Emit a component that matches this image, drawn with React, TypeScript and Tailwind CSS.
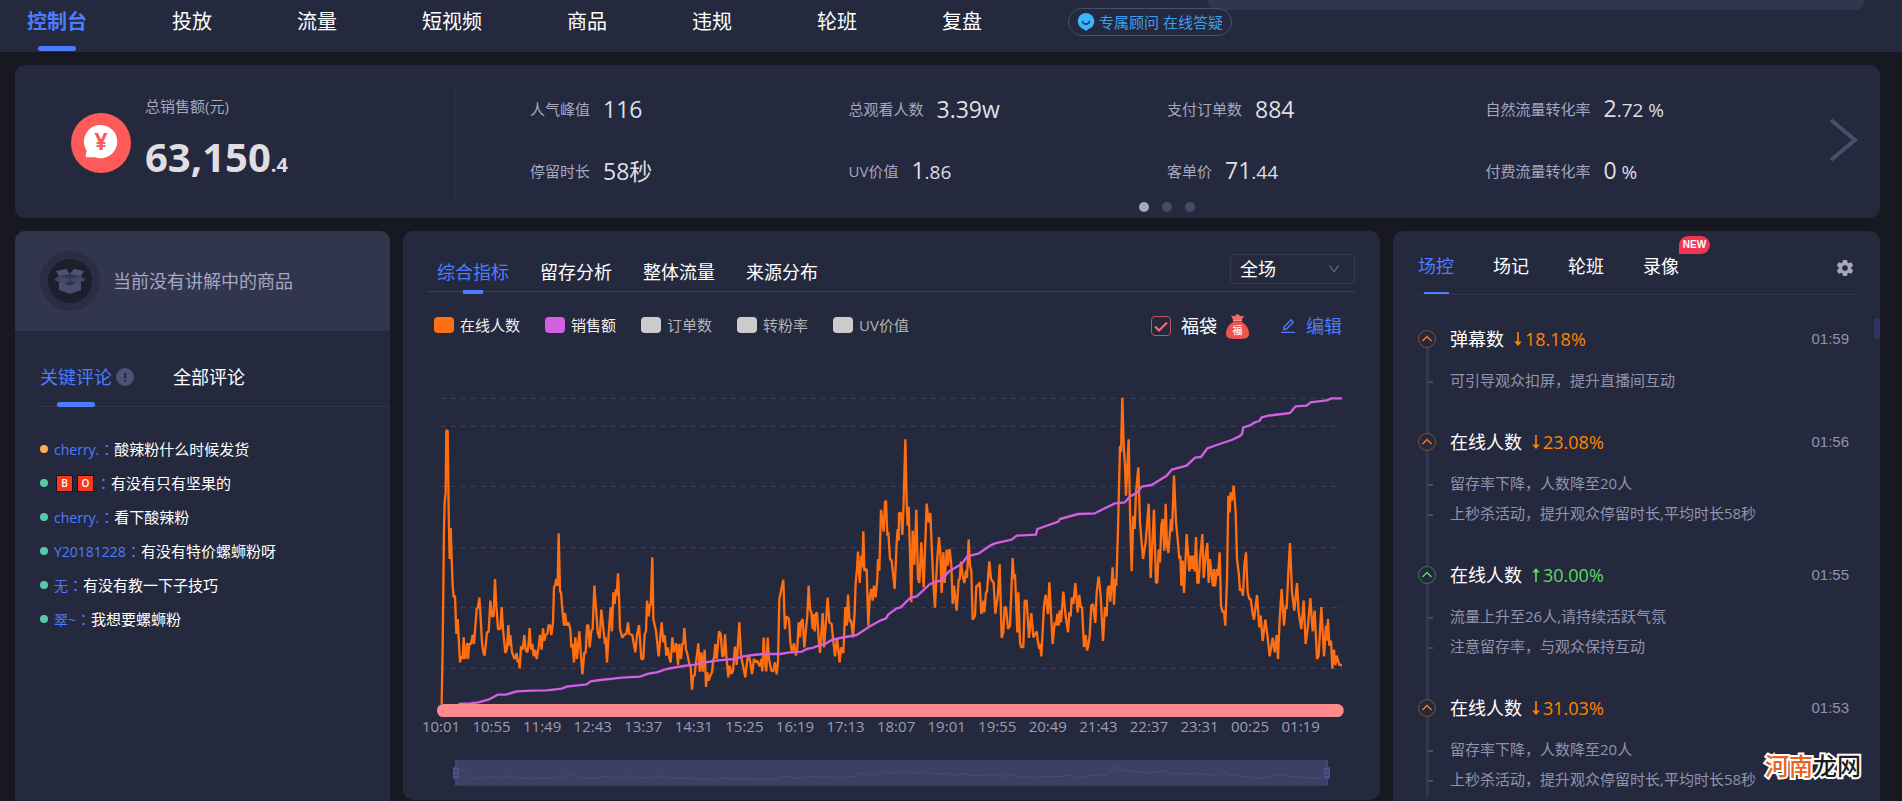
import { useState } from 'react';
import clsx from 'clsx';
import { AiOutlineDown, AiOutlineEdit } from 'react-icons/ai';
import { IoMdSettings } from 'react-icons/io';

const navItems = ['控制台', '投放', '流量', '短视频', '商品', '违规', '轮班', '复盘'];

const metrics = [
  { label: '人气峰值', value: '116' },
  { label: '总观看人数', value: '3.39w' },
  { label: '支付订单数', value: '884' },
  { label: '自然流量转化率', value: '2', small: '.72 %' },
  { label: '停留时长', value: '58秒' },
  { label: 'UV价值', value: '1', small: '.86' },
  { label: '客单价', value: '71', small: '.44' },
  { label: '付费流量转化率', value: '0', small: ' %' },
];

const comments = [
  { name: 'cherry.', text: '酸辣粉什么时候发货', hot: true },
  { name: 'BO', text: '有没有只有坚果的', blocks: true },
  { name: 'cherry.', text: '看下酸辣粉' },
  { name: 'Y20181228', text: '有没有特价螺蛳粉呀' },
  { name: '无', text: '有没有教一下子技巧' },
  { name: '翠~', text: '我想要螺蛳粉' },
];

const chartTabs = ['综合指标', '留存分析', '整体流量', '来源分布'];

const legend = [
  { label: '在线人数', box: 'bg-[#ff6f12]', text: 'text-[#f0f0f0]' },
  { label: '销售额', box: 'bg-[#d35fe3]', text: 'text-[#f0f0f0]' },
  { label: '订单数', box: 'bg-[#cccccc]', text: 'text-[#b3b3b5]' },
  { label: '转粉率', box: 'bg-[#cccccc]', text: 'text-[#b3b3b5]' },
  { label: 'UV价值', box: 'bg-[#cccccc]', text: 'text-[#b3b3b5]' },
];

const events = [
  { title: '弹幕数', pct: '18.18%', up: false, time: '01:59', tips: ['可引导观众扣屏，提升直播间互动'] },
  { title: '在线人数', pct: '23.08%', up: false, time: '01:56', tips: ['留存率下降，人数降至20人', '上秒杀活动，提升观众停留时长,平均时长58秒'] },
  { title: '在线人数', pct: '30.00%', up: true, time: '01:55', tips: ['流量上升至26人,请持续活跃气氛', '注意留存率，与观众保持互动'] },
  { title: '在线人数', pct: '31.03%', up: false, time: '01:53', tips: ['留存率下降，人数降至20人', '上秒杀活动，提升观众停留时长,平均时长58秒'] },
];

const times = ['10:01', '10:55', '11:49', '12:43', '13:37', '14:31', '15:25', '16:19', '17:13', '18:07', '19:01', '19:55', '20:49', '21:43', '22:37', '23:31', '00:25', '01:19'];

// x,y pairs in chart units, first half of the stream
const onlineDay =
  '125,975 128,800 132,450 134,370 137,340 139,155 143,155 146,400 149,540 152,447 155,540 158,620 161,655 165,650 169,765 173,720 180,850 184,830 188,840 191,775 195,840 198,820 202,792 204,840 208,795 213,795 218,768 222,795 230,690 234,685 238,656 241,700 246,790 250,820 254,830 261,760 266,758 271,665 276,712 281,712 285,600 288,665 294,750 301,750 305,684 309,750 316,822 321,810 325,738 328,800 331,768 336,820 344,840 350,822 353,850 356,840 359,868 363,802 368,812 373,768 377,812 382,820 385,802 389,747 393,812 397,795 401,832 405,812 410,840 416,802 420,768 425,812 429,748 433,785 437,768 442,765 446,738 450,740 454,768 459,730 462,625 465,620 469,600 473,620 476,463 480,637 483,640 488,702 492,740 495,702 500,740 505,730 511,750 514,805 518,795 522,850 526,775 531,840 538,757 543,830 547,886 553,820 557,822 561,740 565,738 569,805 574,755 578,750 583,620 589,700 593,760 599,778 604,692 609,740 615,795 617,775 621,850 626,765 632,684 636,757 640,640 644,675 648,630 650,650 654,583 657,650 660,750 667,776 674,766 679,765 684,730 688,765 697,768 701,792 706,820 711,768 717,738 724,840 730,840 734,765 738,757 741,665 746,712 750,675 752,680 757,535 760,720 768,755 776,832 785,730 790,790 794,768 799,830 803,805 807,832 812,850 817,775 822,820 829,793 834,858 838,795 843,840 847,793 850,795 853,747 858,812 862,825 868,855 872,865 876,932 880,890 884,890 888,850 895,793 899,878 904,820 908,878 914,812 918,924 922,880 926,905 931,890 936,880 940,840 942,840 946,795 950,840 957,757 962,765 967,832 971,830 975,766 979,830 985,895 989,860 994,885 999,875 1005,803 1010,858 1018,730 1023,830 1030,865 1036,895 1042,840 1047,830 1051,850 1056,885 1062,840 1068,850 1072,845 1077,858 1080,862 1084,840 1087,877 1091,776 1096,860 1099,877 1103,776 1107,840 1114,875 1120,877 1125,850 1130,886 1134,850 1138,660 1150,602 1153,700 1155,750 1160,712 1167,720 1171,790 1176,820 1182,793 1188,830 1192,805 1196,730 1200,775 1203,730 1208,720 1213,805 1219,740 1222,710 1226,620 1230,690 1234,700 1238,750 1241,705 1244,757 1248,702 1251,702 1256,780 1260,822 1268,702 1272,805 1277,740 1283,656 1288,730 1295,735 1298,768 1305,832 1311,778 1319,850 1323,805 1330,822 1336,684 1340,740 1344,647 1349,730 1353,722 1359,775 1364,700 1367,610 1371,570 1374,518 1379,612 1384,530 1387,565 1390,457 1393,575 1400,570 1405,740 1409,655 1414,630 1418,665 1422,620 1427,655 1432,600 1434,540 1438,575 1443,392 1451,458 1455,370 1458,365 1462,470 1465,460 1470,540 1475,545 1484,630 1490,490 1493,450 1496,485';

// second half, x counted from 1440
const onlineNight =
  '57,402 63,402 67,468 70,400 76,181 80,370 83,440 86,383 94,670 98,455 103,557 109,392 114,600 118,612 124,490 131,625 140,374 146,430 151,402 155,500 160,610 165,686 171,550 177,474 181,520 185,642 190,520 194,612 200,512 203,560 209,510 214,560 218,675 222,620 230,695 236,602 239,602 243,548 248,590 253,612 258,575 261,597 266,482 270,560 274,575 278,722 285,710 289,620 294,620 299,610 304,705 311,665 313,700 318,640 321,638 328,547 333,600 341,612 346,704 354,645 359,556 365,777 370,760 374,684 378,685 384,750 390,740 398,537 402,600 405,585 412,760 415,640 420,790 423,804 430,804 434,665 440,665 447,777 454,702 460,775 470,757 474,790 478,810 480,795 484,832 492,680 497,648 504,705 508,610 518,795 524,730 528,740 532,705 536,740 539,695 543,730 550,638 557,712 564,760 568,700 572,712 575,656 580,675 586,612 593,700 598,648 602,685 606,684 612,804 617,768 621,814 625,800 629,770 634,680 639,675 646,732 650,640 656,593 662,650 669,786 675,684 680,712 683,630 687,620 691,668 698,565 702,677 706,600 709,620 714,450 720,200 723,220 727,56 731,200 735,260 738,350 746,181 750,400 755,577 760,410 764,450 768,340 775,265 780,430 789,540 797,490 806,374 812,597 822,392 828,612 832,610 836,512 840,550 844,440 848,420 853,515 857,374 861,500 865,522 873,420 876,457 882,290 888,430 893,480 898,540 901,530 904,620 908,545 912,642 920,465 924,520 928,577 932,530 936,570 940,530 944,577 948,474 952,612 956,612 960,540 967,465 971,597 977,530 982,492 986,612 990,540 996,600 999,622 1002,570 1005,622 1011,570 1014,590 1019,520 1023,680 1028,700 1032,695 1036,740 1041,600 1045,350 1049,400 1052,340 1056,365 1061,320 1067,400 1071,540 1076,580 1080,635 1085,630 1089,650 1093,560 1098,520 1103,640 1108,660 1112,660 1118,705 1122,722 1131,648 1138,745 1142,710 1148,786 1156,722 1163,775 1169,832 1178,776 1184,820 1190,768 1194,840 1199,720 1205,630 1212,740 1217,680 1220,690 1225,580 1230,492 1236,640 1243,695 1251,612 1256,700 1264,750 1271,665 1277,795 1284,740 1291,657 1298,757 1304,695 1311,840 1316,830 1324,684 1332,832 1338,740 1341,785 1344,720 1348,800 1353,785 1357,868 1362,812 1366,858 1370,830 1378,858 1386,858';

const salesDay =
  '175,975 210,973 235,970 265,962 293,947 318,947 350,937 395,935 440,934 485,929 500,923 560,916 572,907 600,903 640,899 665,896 720,893 745,884 770,880 800,870 850,861 885,857 915,850 955,844 1000,840 1030,832 1060,828 1090,825 1140,825 1165,821 1205,818 1220,810 1240,806 1260,798 1275,795 1295,783 1320,777 1370,768 1385,758 1410,742 1440,725';

const salesNight =
  '18,718 25,706 50,688 62,685 90,657 110,652 150,615 180,605 210,575 245,555 262,532 295,524 330,500 345,493 395,482 410,470 468,467 472,450 535,428 540,420 595,405 645,403 670,390 705,373 735,370 750,352 770,342 785,323 815,318 860,290 875,272 920,260 945,236 963,234 982,208 1010,198 1055,183 1078,172 1086,165 1090,145 1110,139 1125,130 1138,126 1145,115 1165,110 1230,102 1247,82 1280,80 1292,70 1340,64 1355,58 1386,58';

function toPoints(day: string, night: string): number[][] {
  const parse = (s: string, dx: number) =>
    s.split(' ').map((p) => {
      const [x, y] = p.split(',').map(Number);
      return [x + dx, y];
    });
  return [...parse(day, 0), ...parse(night, 1440)];
}

const online = toPoints(onlineDay, onlineNight);
const sales = toPoints(salesDay, salesNight);

// smoothed copy of the viewers line for the zoom bar
const preview = online.slice(2, -3).map(([x], i) => {
  const near = online.slice(i, i + 5);
  const y = near.reduce((sum, p) => sum + p[1], 0) / near.length;
  return [168 + (x - 125) * 0.968, 1207 - (975 - y) * 0.055];
});

function TrendChart() {
  return (
    <svg viewBox="9 -123 2931 1386" className="block w-full" role="img" aria-label="在线人数与销售额走势">
      {[58, 142, 322, 506, 686, 868].map((y) => (
        <line key={y} x1="122" x2="2828" y1={y} y2={y} stroke="#3f4460" strokeWidth="3" strokeDasharray="15 15" />
      ))}
      <polyline points={online.join(' ')} fill="none" stroke="#ff6f12" strokeWidth="7" strokeLinejoin="bevel" />
      <polyline points={sales.join(' ')} fill="none" stroke="#d35fe3" strokeWidth="7" strokeLinejoin="round" />
      <rect x="111" y="975" width="2720" height="39" rx="19" fill="#ff8a8e" />
      {times.map((t, i) => (
        <text key={t} x={123 + i * 151.7} y="1059" textAnchor="middle" fontSize="45" fill="#9a9db5">
          {t}
        </text>
      ))}
      <rect x="165" y="1143" width="2618" height="77" fill="#3c4163" />
      <polyline points={preview.join(' ')} fill="none" stroke="#474e79" strokeWidth="3" />
      {[168, 2781].map((x) => (
        <g key={x}>
          <line x1={x} x2={x} y1="1143" y2="1220" stroke="#4a5288" strokeWidth="3" />
          <rect x={x - 9} y="1165" width="18" height="34" fill="#4a5288" />
          <path d={`M${x - 5} 1176h10M${x - 5} 1188h10`} stroke="#2c3150" strokeWidth="3" />
        </g>
      ))}
    </svg>
  );
}

function Header() {
  return (
    <header className="relative flex h-[52px] items-start bg-[#25293d] pl-[27px]">
      <div className="absolute top-0 right-[37px] left-[1207px] h-[10px] rounded-b-[20px] bg-[#32354e]" />
      <nav className="flex gap-[85px]">
        {navItems.map((item, i) => (
          <a
            key={item}
            href="#"
            className={clsx('flex flex-col items-center text-xl whitespace-nowrap', i === 0 ? 'font-bold text-[#4d7cff]' : 'text-white')}
          >
            <span className="h-[42px] leading-11">{item}</span>
            {i === 0 && <span className="mt-1 h-[5px] w-[38px] rounded-sm bg-[#4d7cff]" />}
          </a>
        ))}
      </nav>
      <button className="relative mt-2 ml-[86px] flex h-7 w-[164px] items-center gap-1 rounded-full border border-[#405272] pl-2 text-[15px] whitespace-nowrap text-[#3d9fee]">
        <svg viewBox="0 0 18 18" className="size-[18px] shrink-0">
          <path d="M9 0a8.2 8.2 0 0 1 2.6 16L9 18l-2.600-2A8.200 8.200 0 0 1 9 0z" fill="#38b6ff" />
          <path d="M5.500 8.500c1 3.400 6 3.400 7 0" fill="none" stroke="#1d3f78" strokeWidth="1.700" strokeLinecap="round" />
        </svg>
        专属顾问 在线答疑
      </button>
    </header>
  );
}

function Summary() {
  return (
    <section className="flex h-[153px] rounded-[10px] bg-[#25293d]">
      <div className="mt-[21px] mb-[19px] flex w-[440px] shrink-0 items-center gap-[14px] border-r border-[#32364d] pl-14">
        <svg viewBox="0 0 60 60" className="size-[60px]">
          <circle cx="30" cy="30" r="30" fill="#ff5a5a" />
          <path d="M30 12a16.600 16.600 0 1 1-6 32.200h-8q-1.500 0-1.200-1.500l.8-5.200A16.600 16.600 0 0 1 30 12z" fill="#fff" />
          <text x="30" y="37" textAnchor="middle" fontSize="23" fontWeight="700" fill="#ff5a5a">¥</text>
        </svg>
        <div className="mt-[10px] self-start">
          <p className="text-[15px] leading-5 text-[#a4a7c0]">总销售额(元)</p>
          <p className="mt-[21px] text-[40px] leading-10 font-bold text-[#dfdfe3]">
            63,150<span className="text-xl">.4</span>
          </p>
        </div>
      </div>
      <div className="min-w-0 flex-1 pt-7 pl-[75px]">
        <dl className="grid grid-cols-4 gap-y-[30px]">
          {metrics.map((m) => (
            <div key={m.label} className="flex h-8 items-center gap-[13px] whitespace-nowrap">
              <dt className="text-[15px] text-[#a4a7c0]">{m.label}</dt>
              <dd className="text-[23px] leading-8 whitespace-pre text-[#dfdfe3]">
                {m.value}
                {m.small && <span className="text-[19px]">{m.small}</span>}
              </dd>
            </div>
          ))}
        </dl>
        <div className="mt-[15px] flex justify-center gap-[13px]">
          <span className="size-[10px] rounded-full bg-[#a5a8c3]" />
          <span className="size-[10px] rounded-full bg-[#474b68]" />
          <span className="size-[10px] rounded-full bg-[#474b68]" />
        </div>
      </div>
      <button aria-label="下一页" className="flex w-[76px] items-center justify-center pb-1 pl-1">
        <svg viewBox="0 0 28 44" className="h-11 w-7" fill="none" stroke="#4a4e6b" strokeWidth="4">
          <path d="M1 2l24 20L1 42" />
        </svg>
      </button>
    </section>
  );
}

function Comments() {
  return (
    <section className="w-[375px] shrink-0 overflow-hidden rounded-t-[10px] bg-[#25293d]">
      <div className="flex h-[100px] items-center gap-[13px] bg-[#32354e] pl-[25px]">
        <div className="flex size-[60px] items-center justify-center rounded-full bg-[#2b2e42]">
          <div className="flex size-11 items-center justify-center rounded-full bg-[#1c1f2c]">
            <svg viewBox="0 0 32 25" className="w-8">
              <path d="M5 12l11 4 11-4v9l-11 4-11-4z" fill="#4a4e6e" />
              <path d="M5 6l11-2 11 2v6l-11 3-11-3z" fill="#34384f" />
              <path d="M2 2l10-2 4 5-11 2zM30 2L20 0l-4 5 11 2z" fill="#4f5375" />
              <path d="M5 7l11 3-5 5L0 11zM27 7l-11 3 5 5 11-4z" fill="#454967" />
            </svg>
          </div>
        </div>
        <span className="text-lg text-[#a4a7c0]">当前没有讲解中的商品</span>
      </div>
      <div className="ml-[25px] flex h-[76px] items-start border-b border-[#32364d] pt-[34px]">
        <button className="flex flex-col items-center text-lg text-[#4d7cff]">
          <span className="h-6 leading-6">关键评论</span>
          <span className="mt-[13px] h-[5px] w-[38px] rounded-sm bg-[#4d7cff]" />
        </button>
        <span className="mt-[3px] ml-1 flex size-[18px] items-center justify-center rounded-full bg-[#4d5278] text-[13px] leading-none font-bold text-[#25293d]">
          !
        </span>
        <button className="ml-[39px] h-6 text-lg leading-6 text-white">全部评论</button>
      </div>
      <ul className="pt-[25px] pl-[25px] text-[15px]">
        {comments.map((c, i) => (
          <li key={i} className="flex h-[34px] items-center whitespace-nowrap">
            <span className={clsx('mr-[6px] size-2 rounded-full', c.hot ? 'bg-[#ffac59]' : 'bg-[#57cba9]')} />
            {c.blocks ? (
              <span className="flex gap-1 px-[2px]">
                {c.name.split('').map((ch) => (
                  <span
                    key={ch}
                    className="flex size-[17px] items-center justify-center border border-[#14151d] bg-[#f5391a] text-[10px] leading-none font-semibold text-white"
                  >
                    {ch}
                  </span>
                ))}
              </span>
            ) : (
              <span className="text-[14px] text-[#4d7cff]">{c.name}</span>
            )}
            <span className="font-['Noto_Sans_CJK_JP',sans-serif] text-[#4d7cff]" lang="ja">：</span>
            <span className="text-white">{c.text}</span>
          </li>
        ))}
      </ul>
    </section>
  );
}

function LuckyBag() {
  return (
    <svg viewBox="0 0 23 25" className="h-[25px] w-[23px]">
      <path d="M5 1.500l3 .8L11.500 0 15 2.300l3-.8-2.500 5h-8z" fill="#f26a66" />
      <path d="M7 8C2 11 0 16 0 19.500 0 24 3 25 11.500 25S23 24 23 19.500C23 16 21 11 16 8z" fill="#ee5350" />
      <path d="M7 6.800h9" stroke="#ffb199" strokeWidth="1.200" />
      <text x="11.500" y="20" textAnchor="middle" fontSize="10" fontWeight="700" fill="#ffe3dc">福</text>
    </svg>
  );
}

function TrendPanel() {
  const [showBag, setShowBag] = useState(true);

  return (
    <section className="min-w-0 flex-1 self-start rounded-[10px] bg-[#25293d]">
      <div className="px-[25px] pt-[23px]">
        <div className="flex h-[38px] items-start justify-between border-b border-[#3c405a]">
          <div className="flex gap-[31px] pt-[6px] pl-[9px]">
            {chartTabs.map((t, i) => (
              <button key={t} className={clsx('flex flex-col items-center text-lg', i === 0 ? 'text-[#4d7cff]' : 'text-white')}>
                <span className="h-6 leading-6">{t}</span>
                {i === 0 && <span className="mt-[6px] h-1 w-5 bg-[#4d7cff]" />}
              </button>
            ))}
          </div>
          <div className="relative">
            <select
              aria-label="时间范围"
              className="h-[30px] w-[125px] appearance-none rounded border border-[#363a50] bg-transparent pl-[9px] text-lg leading-none text-white"
            >
              <option>全场</option>
            </select>
            <AiOutlineDown className="pointer-events-none absolute top-2 right-[14px] size-[14px] text-[#6a6d80]" />
          </div>
        </div>
        <div className="mt-[22px] flex h-6 items-center justify-between pr-[13px] pl-[6px]">
          <ul className="flex gap-[25px] self-start text-[15px] leading-[22px] whitespace-nowrap">
            {legend.map((l) => (
              <li key={l.label} className="flex items-center gap-[6px]">
                <span className={clsx('h-4 w-5 rounded', l.box)} />
                <span className={l.text}>{l.label}</span>
              </li>
            ))}
          </ul>
          <div className="flex items-center text-lg leading-6 whitespace-nowrap">
            <label className="flex items-center gap-[10px] text-white">
              <span className="grid size-5">
                <input
                  type="checkbox"
                  checked={showBag}
                  onChange={() => setShowBag(!showBag)}
                  className="col-start-1 row-start-1 size-5 appearance-none rounded border border-[#c25358]"
                />
                {showBag && (
                  <svg viewBox="0 0 20 20" className="pointer-events-none col-start-1 row-start-1 size-5" fill="none" stroke="#ff6b6b" strokeWidth="2">
                    <path d="M4 10.500l4 4L16 6.500" />
                  </svg>
                )}
              </span>
              福袋
            </label>
            <span className="ml-[9px]">
              <LuckyBag />
            </span>
            <button className="ml-[30px] flex items-center gap-[9px] text-[#4d7cff]">
              <AiOutlineEdit className="size-[18px]" />
              编辑
            </button>
          </div>
        </div>
      </div>
      <TrendChart />
    </section>
  );
}

function Control() {
  return (
    <section className="relative w-[487px] shrink-0 rounded-t-[10px] bg-[#25293d] px-[25px]">
      <div className="flex items-start border-b border-[#32364d] pt-[23px]">
        <div className="flex flex-1 gap-[39px] text-lg whitespace-nowrap">
          {['场控', '场记', '轮班', '录像'].map((t, i) => (
            <button key={t} className={clsx('relative flex flex-col items-center', i === 0 ? 'text-[#4d7cff]' : 'text-white')}>
              <span className="h-6 leading-6">{t}</span>
              {i === 0 && <span className="mt-[14px] h-[2px] w-[25px] bg-[#4d7cff]" />}
              {t === '录像' && (
                <span className="absolute -top-[18px] left-full flex h-[18px] w-[31px] items-center justify-center rounded-full rounded-bl-none bg-[#f23551] font-['Liberation_Sans',sans-serif] text-[10px] leading-none font-bold text-white">
                  NEW
                </span>
              )}
            </button>
          ))}
        </div>
        <button aria-label="设置" className="mt-1">
          <IoMdSettings className="size-5 text-[#a4a7c0]" />
        </button>
      </div>
      <div className="absolute top-[87px] right-0 h-[21px] w-[6px] rounded-full bg-[#2e3563]" />
      <ol className="pt-8 pr-[6px]">
        {events.map((e, i) => (
          <li key={i} className="group flex">
            <div className="mt-[3px] -mb-[3px] flex w-[18px] flex-col items-center">
              <svg
                viewBox="0 0 18 18"
                fill="none"
                className={clsx('size-[18px] shrink-0', e.up ? 'text-[#5fd864]' : 'text-[#ff7a1f]')}
                stroke="currentColor"
              >
                <circle cx="9" cy="9" r="8.500" strokeOpacity="0.45" />
                <path d="M4.500 11L9 6.500l4.500 4.500" strokeWidth="1.400" />
              </svg>
              <span className="w-[3px] flex-1 bg-[#32364e]" />
            </div>
            <div className="ml-[14px] flex-1 pb-[35px] group-last:pb-0">
              <div className="flex h-6 items-center text-lg leading-6">
                <span className="text-white">{e.title}</span>
                <span className={clsx('ml-[9px] flex items-center gap-[2px]', e.up ? 'text-[#5fd864]' : 'text-[#ff8400]')}>
                  <svg viewBox="0 0 10 14" className={clsx('h-[14px] w-[10px]', e.up && 'rotate-180')} fill="currentColor">
                    <path d="M4.200 0h1.600v9.500H8.800L5 14 1.200 9.500h3z" />
                  </svg>
                  {e.pct}
                </span>
                <time className="ml-auto font-['Liberation_Sans',sans-serif] text-[15px] text-[#8f94ad]">{e.time}</time>
              </div>
              <ul className="mt-[14px] text-[15px] leading-[30px] whitespace-nowrap text-[#9094ae]">
                {e.tips.map((tip) => (
                  <li key={tip} className="relative">
                    <span className="absolute top-4 -left-[22px] h-[2px] w-[5px] bg-[#454a68]" />
                    {tip}
                  </li>
                ))}
              </ul>
            </div>
          </li>
        ))}
      </ol>
      <div className="absolute right-[19px] bottom-[18px] text-2xl leading-[34px] font-medium text-[#1c1c1c] [-webkit-text-stroke:4px_white] [paint-order:stroke]">
        <span className="text-[#e8641b]">河南</span>龙网
      </div>
    </section>
  );
}

export default function App() {
  return (
    <div className="flex min-h-screen flex-col bg-[#171822] font-['Open_Sans','Noto_Sans_CJK_SC',sans-serif]">
      <Header />
      <main className="flex flex-1 flex-col gap-[13px] pt-[13px] pr-[22px] pl-[15px]">
        <Summary />
        <div className="flex flex-1 gap-[13px]">
          <Comments />
          <TrendPanel />
          <Control />
        </div>
      </main>
    </div>
  );
}
